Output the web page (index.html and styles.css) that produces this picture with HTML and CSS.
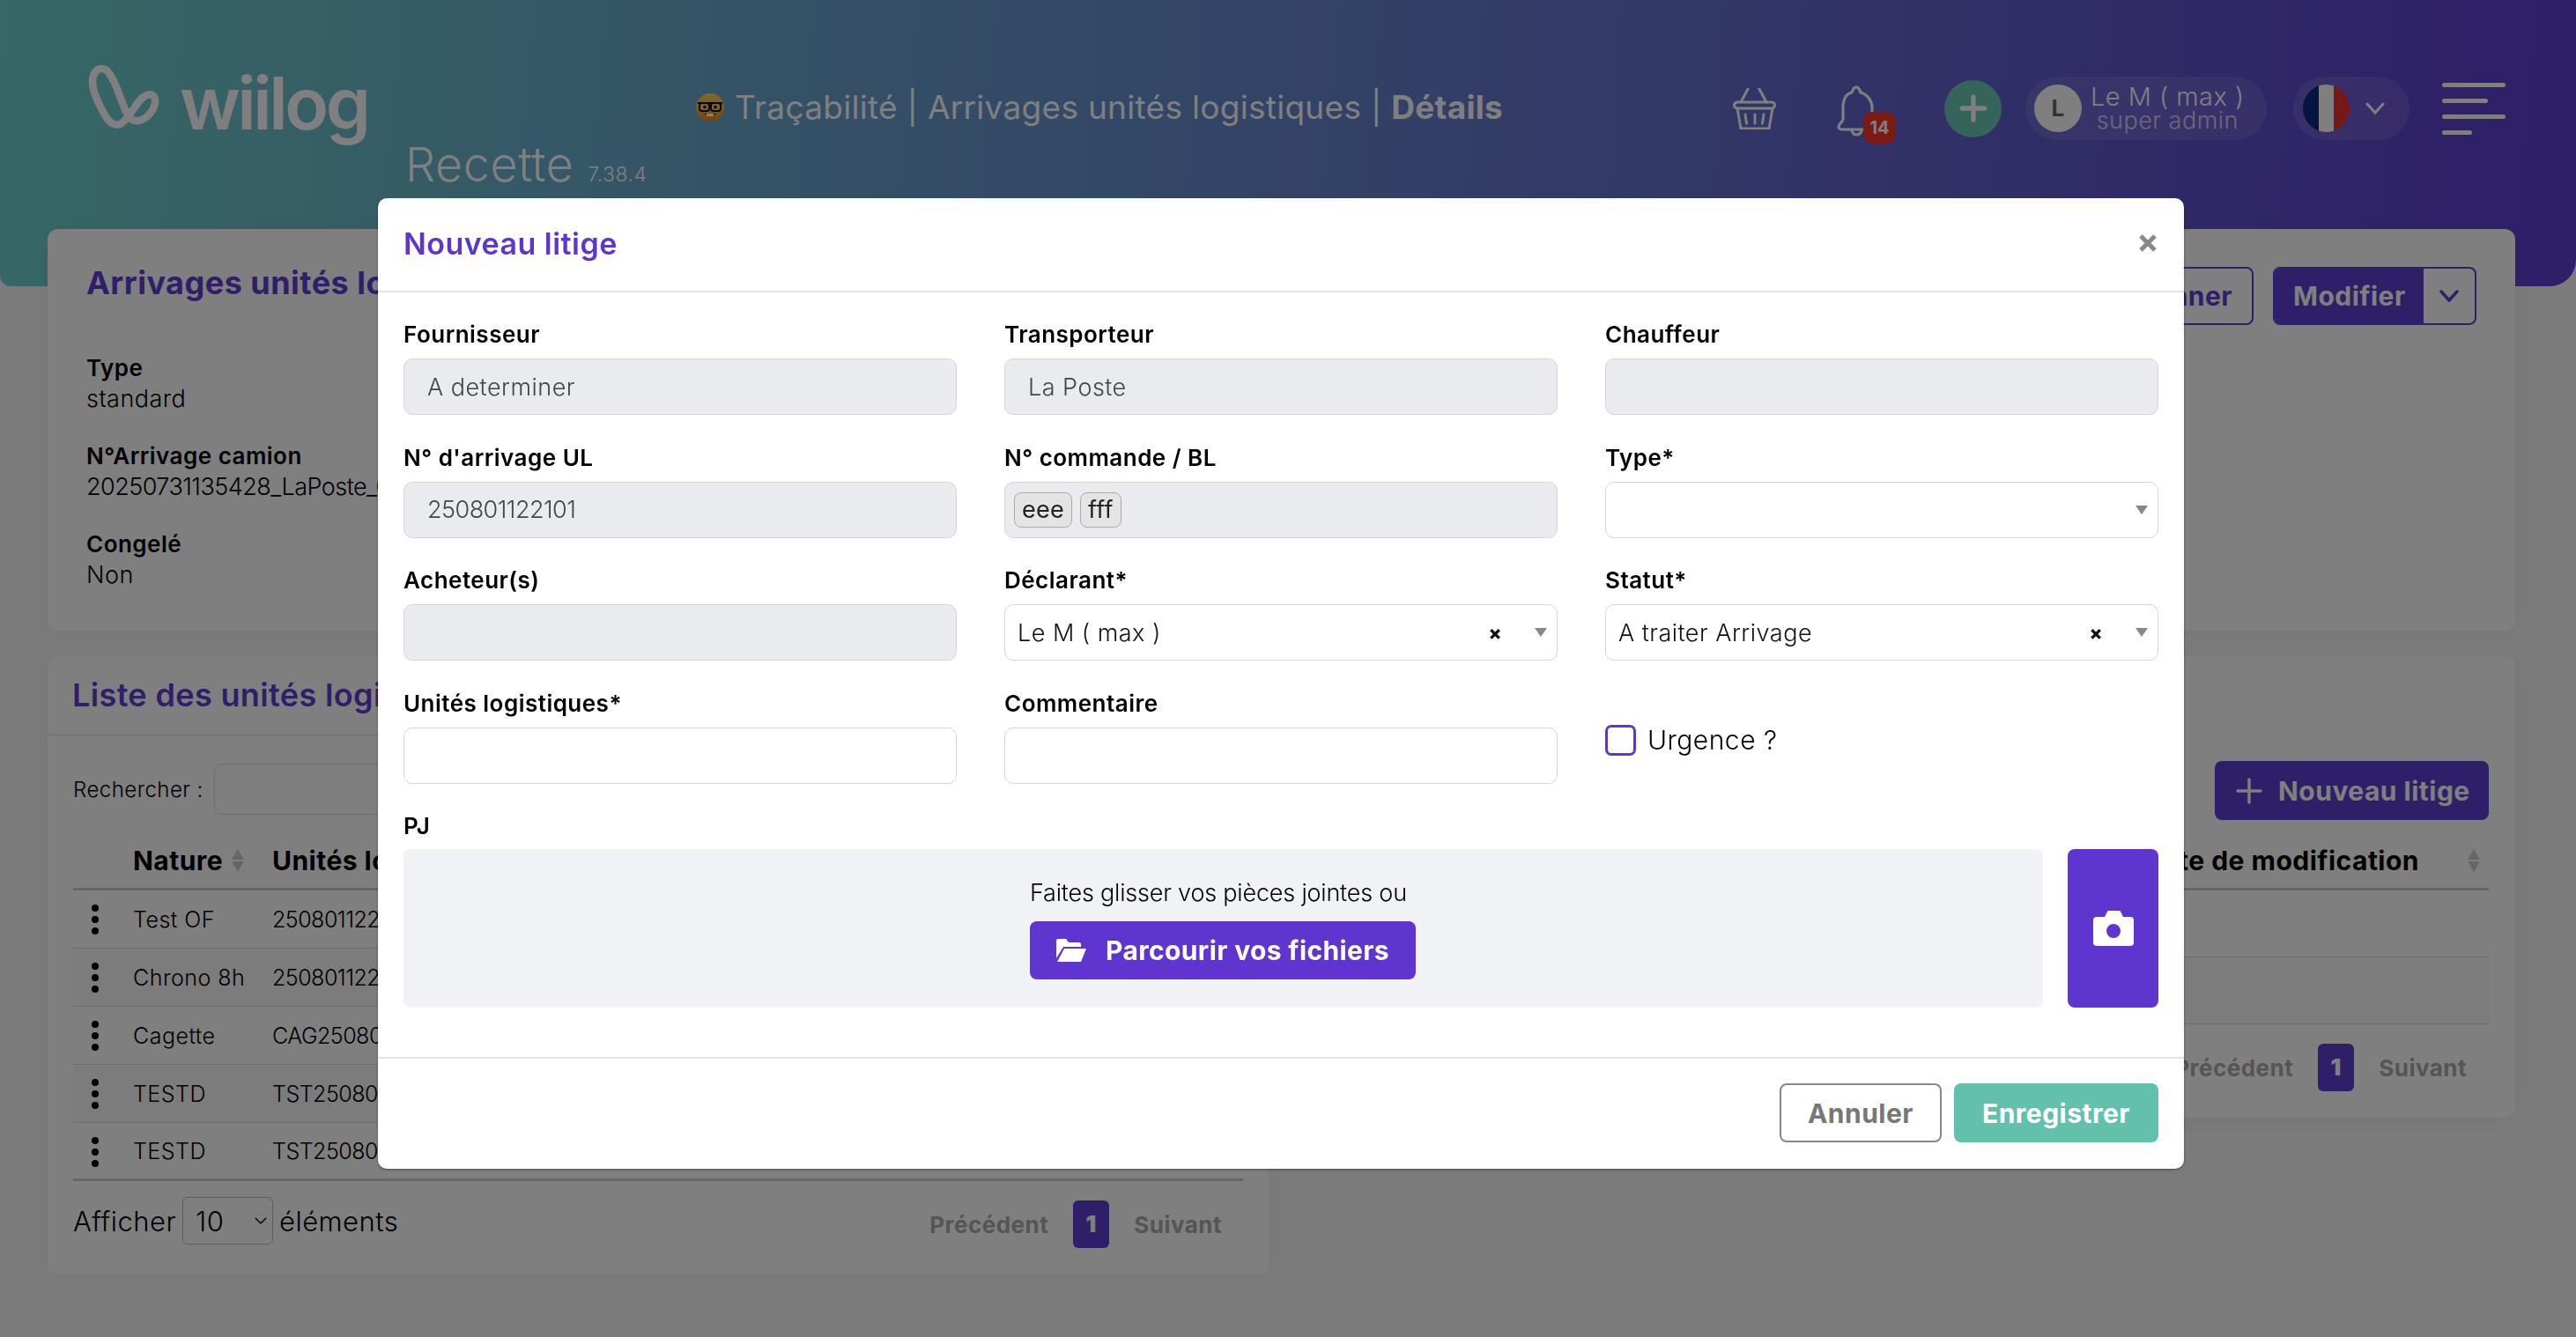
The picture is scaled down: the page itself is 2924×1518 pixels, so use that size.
FILE: index.html
```html
<!DOCTYPE html>
<html lang="fr">
<head>
    <meta charset="UTF-8">
    <title>Wiilog - Arrivages unités logistiques</title>
    <link rel="stylesheet" href="styles.css">
</head>
<body>
    <header class="topbar">
        <div class="brand">
            <div class="logo">
                <svg class="logo-mark" viewBox="0 0 110 100" fill="none" stroke="#fff" stroke-width="8.500">
                    <path d="M25 18C18 18 15 26 15 33C15 45 24 62 30 72C34 80 42 84 48 80C54 76 60 66 67 56C72 49 79 46 83 48C88 51 87 60 81 68C75 76 66 79 60 76C55 73 52 65 47 52C43 40 38 28 33 22C31 19 28 18 25 18Z"/>
                </svg>
                <span class="logo-text">wiilog</span>
            </div>
            <div class="env">Recette <small>7.38.4</small></div>
        </div>
        <div class="page-title">
            <svg class="nerd" viewBox="0 0 32 32">
                <defs>
                    <linearGradient id="nerdFace" x1="0" y1="0" x2="0" y2="1">
                        <stop offset="0" stop-color="#ffd85a"/>
                        <stop offset="1" stop-color="#e88a18"/>
                    </linearGradient>
                </defs>
                <circle cx="16" cy="16" r="16" fill="url(#nerdFace)"/>
                <path d="M2 11h28" stroke="#111" stroke-width="2"/>
                <rect x="4" y="11" width="11" height="9" rx="3" fill="#f8d070" stroke="#111" stroke-width="2"/>
                <rect x="17" y="11" width="11" height="9" rx="3" fill="#f8d070" stroke="#111" stroke-width="2"/>
                <circle cx="10" cy="15.500" r="2" fill="#3a2410"/>
                <circle cx="22" cy="15.500" r="2" fill="#3a2410"/>
                <path d="M9 23c4 4 10 4 14 0z" fill="#5a2a10"/>
                <rect x="12" y="23" width="8" height="3" fill="#fff"/>
            </svg>
            <span>Traçabilité | Arrivages unités logistiques | <b>Détails</b></span>
        </div>
        <div class="actions">
            <svg class="basket" viewBox="0 0 49 47" fill="none" stroke="#fff" stroke-width="3" stroke-linecap="round">
                <path d="M17 1L9 16M30 1L38 16"/>
                <rect x="1.500" y="16" width="46" height="7" rx="3.500"/>
                <path d="M5 23L9 46H41L45 23M14 30l1.500 10M25 30v10M35 30l-1.500 10"/>
            </svg>
            <div class="bell">
                <svg viewBox="0 0 45 58" fill="none" stroke="#fff" stroke-width="3.200" stroke-linecap="round">
                    <path d="M22 2C26 2 26 7 27 8C35 10 40 18 40 26V36"/>
                    <path d="M22 2C18 2 18 7 17 8C9 10 7 18 7 26V38C7 42 2 43 2 47C2 49 4 50 6 50H32"/>
                    <path d="M17 50C17 58 28 58 28 50"/>
                </svg>
                <span class="badge">14</span>
            </div>
            <div class="add-btn">
                <svg viewBox="0 0 32 32"><path d="M16 4v24M4 16h24" stroke="#fff" stroke-width="5" stroke-linecap="round"/></svg>
            </div>
            <div class="user-pill">
                <span class="avatar">L</span>
                <div class="user-text">
                    <div class="user-name">Le M ( max )</div>
                    <div class="user-role">super admin</div>
                </div>
            </div>
            <div class="lang-pill">
                <span class="flag"><i class="blue"></i><i class="white"></i><i class="red"></i></span>
                <svg class="chevron" viewBox="0 0 22 14" fill="none" stroke="#fff" stroke-width="3" stroke-linecap="round"><path d="M2 2l9 10 9-10"/></svg>
            </div>
            <div class="burger"><i class="long"></i><i class="mid"></i><i class="long"></i><i class="short"></i></div>
        </div>
    </header>

    <main class="content">
        <section class="card details">
            <div class="details-head">
                <h2>Arrivages unités logistiques</h2>
                <div class="details-btns">
                    <button class="btn-outline">Scanner</button>
                    <div class="split">
                        <span class="split-main">Modifier</span>
                        <span class="split-arrow">
                            <svg viewBox="0 0 22 14" fill="none" stroke="#5e3cd0" stroke-width="3.500" stroke-linecap="round"><path d="M2 2l9 10 9-10"/></svg>
                        </span>
                    </div>
                </div>
            </div>
            <dl class="info">
                <dt>Type</dt><dd>standard</dd>
                <dt>N°Arrivage camion</dt><dd class="num">20250731135428_LaPoste_0</dd>
                <dt>Congelé</dt><dd>Non</dd>
            </dl>
        </section>

        <div class="lists">
            <section class="card list-left">
                <h3 class="list-title">Liste des unités logistiques</h3>
                <div class="list-body">
                    <div class="search">Rechercher : <span class="search-box"></span></div>
                    <div class="thead">
                        <span class="col-nature">Nature <i class="sort"></i></span>
                        <span>Unités logistiques</span>
                    </div>
                    <div class="row"><i class="dots"></i><span class="col-nature">Test OF</span><span class="num">250801122101</span></div>
                    <div class="row alt"><i class="dots"></i><span class="col-nature">Chrono 8h</span><span class="num">250801122102</span></div>
                    <div class="row"><i class="dots"></i><span class="col-nature">Cagette</span><span class="num">CAG250801122</span></div>
                    <div class="row alt"><i class="dots"></i><span class="col-nature">TESTD</span><span class="num">TST250801122</span></div>
                    <div class="row last"><i class="dots"></i><span class="col-nature">TESTD</span><span class="num">TST250801123</span></div>
                    <div class="list-foot">
                        <div class="length">Afficher <span class="length-select">10 <svg viewBox="0 0 14 9" fill="none" stroke="#111" stroke-width="1.500"><path d="M1 1l6 6 6-6"/></svg></span> éléments</div>
                        <div class="pager"><span>Précédent</span><b>1</b><span>Suivant</span></div>
                    </div>
                </div>
            </section>

            <section class="card list-right">
                <div class="right-head">
                    <button class="btn-new">
                        <svg viewBox="0 0 30 30"><path d="M15 2v26M2 15h26" stroke="#fff" stroke-width="3.500" stroke-linecap="round"/></svg>
                        Nouveau litige
                    </button>
                </div>
                <div class="right-thead"><span>Date de modification</span><i class="sort"></i></div>
                <div class="right-row"></div>
                <div class="right-row alt"></div>
                <div class="pager right-pager"><span>Précédent</span><b>1</b><span>Suivant</span></div>
            </section>
        </div>
    </main>

    <!-- Modal over the dimmed page -->
    <div class="overlay">
        <div class="modal">
            <div class="modal-head">
                <h4>Nouveau litige</h4>
                <svg class="close" viewBox="0 0 20 20"><path d="M2 2l16 16M18 2L2 18" stroke="#888" stroke-width="5"/></svg>
            </div>
            <div class="modal-body">
                <div class="form-grid">
                    <div class="field"><label>Fournisseur</label><div class="input disabled">A determiner</div></div>
                    <div class="field"><label>Transporteur</label><div class="input disabled">La Poste</div></div>
                    <div class="field"><label>Chauffeur</label><div class="input disabled"></div></div>

                    <div class="field"><label>N° d'arrivage UL</label><div class="input disabled num">250801122101</div></div>
                    <div class="field"><label>N° commande / BL</label><div class="input disabled tags"><span class="tag">eee</span><span class="tag">fff</span></div></div>
                    <div class="field"><label>Type*</label><div class="input select"><i class="caret"></i></div></div>

                    <div class="field"><label>Acheteur(s)</label><div class="input disabled"></div></div>
                    <div class="field"><label>Déclarant*</label><div class="input select"><span>Le M ( max )</span><b class="clear">×</b><i class="caret"></i></div></div>
                    <div class="field"><label>Statut*</label><div class="input select"><span>A traiter Arrivage</span><b class="clear">×</b><i class="caret"></i></div></div>

                    <div class="field"><label>Unités logistiques*</label><div class="input"></div></div>
                    <div class="field"><label>Commentaire</label><div class="input"></div></div>
                    <div class="field check-field"><span class="checkbox"></span><span>Urgence ?</span></div>
                </div>
                <label class="pj-label">PJ</label>
                <div class="pj">
                    <div class="dropzone">
                        <span>Faites glisser vos pièces jointes ou</span>
                        <button class="btn-browse">
                            <svg viewBox="0 0 34 26" fill="#fff"><path d="M0 2a2 2 0 0 1 2-2h9l3 4h12a2 2 0 0 1 2 2v3H8L0 22z"/><path d="M9 11h25l-6 15H1z"/></svg>
                            Parcourir vos fichiers
                        </button>
                    </div>
                    <button class="btn-camera">
                        <svg viewBox="0 0 46 40" fill="#fff"><path fill-rule="evenodd" d="M4 7h9l3-6a2 2 0 0 1 2-1h11a2 2 0 0 1 2 1l3 6h8a4 4 0 0 1 4 4v25a4 4 0 0 1-4 4H4a4 4 0 0 1-4-4V11a4 4 0 0 1 4-4zm19 24a8 8 0 1 0 0-16 8 8 0 0 0 0 16z"/></svg>
                    </button>
                </div>
            </div>
            <div class="modal-foot">
                <button class="btn-cancel">Annuler</button>
                <button class="btn-save">Enregistrer</button>
            </div>
        </div>
    </div>
</body>
</html>
```

FILE: styles.css
```css
* {
    box-sizing: border-box;
}

body {
    margin: 0;
    height: 1518px;
    overflow: hidden;
    background-color: #f6f6f6;
    font-family: "Inter", "Liberation Sans", sans-serif;
    letter-spacing: 0.03em;
    color: #000;
}

button {
    font-family: inherit;
    letter-spacing: inherit;
}

.num {
    letter-spacing: -0.02em;
}

/* Header */
.topbar {
    display: flex;
    align-items: flex-start;
    height: 325px;
    padding: 60px 80px 0 90px;
    background: linear-gradient(95deg, #6ed0cb, #5e3cd0);
    border-radius: 0 0 30px 12px;
    color: #fff;
}

.brand {
    width: 700px;
    flex: none;
}

.logo {
    display: flex;
    align-items: flex-start;
    height: 103px;
}

.logo-mark {
    width: 110px;
    height: 100px;
    flex: none;
}

.logo-text {
    margin: 18px 0 0 4px;
    font-size: 82px;
    font-weight: 600;
    line-height: 80px;
    letter-spacing: -3.500px;
}

.env {
    margin-left: 370px;
    font-size: 54px;
    font-weight: 300;
    line-height: 48px;
    white-space: nowrap;
}

.env small {
    font-size: 23px;
}

.page-title {
    display: flex;
    align-items: center;
    gap: 12px;
    margin-top: 37px;
    font-size: 37px;
    font-weight: 400;
    letter-spacing: 0.008em;
    line-height: 50px;
    white-space: nowrap;
}

.page-title b {
    font-weight: 700;
}

.nerd {
    width: 32px;
    height: 32px;
}

.actions {
    display: flex;
    align-items: center;
    height: 72px;
    margin-top: 27px;
    margin-left: auto;
}

.basket {
    width: 49px;
    height: 47px;
}

.bell {
    position: relative;
    width: 67px;
    height: 53px;
    margin-left: 69px;
}

.bell svg {
    display: block;
    width: 45px;
    height: 58px;
}

.badge {
    position: absolute;
    left: 30px;
    top: 30px;
    width: 37px;
    height: 36px;
    border-radius: 10px;
    background-color: #f43424;
    font-size: 20px;
    font-weight: 700;
    line-height: 36px;
    text-align: center;
    letter-spacing: 0;
}

.add-btn {
    display: flex;
    align-items: center;
    justify-content: center;
    width: 65px;
    height: 65px;
    margin-left: 55px;
    border-radius: 50%;
    background-color: #6acab4;
}

.add-btn svg {
    width: 34px;
    height: 34px;
}

.user-pill {
    display: flex;
    align-items: center;
    width: 274px;
    height: 72px;
    margin-left: 27px;
    padding-left: 10px;
    border-radius: 36px;
    background-color: rgba(255, 255, 255, 0.1);
}

.avatar {
    width: 54px;
    height: 54px;
    flex: none;
    border-radius: 50%;
    background-color: #fff;
    color: #666;
    font-size: 26px;
    font-weight: 700;
    line-height: 54px;
    text-align: center;
}

.user-text {
    margin-left: 10px;
    font-weight: 300;
    text-align: center;
}

.user-name {
    font-size: 29px;
    line-height: 28px;
}

.user-role {
    font-size: 27px;
    line-height: 26px;
    opacity: 0.7;
}

.lang-pill {
    display: flex;
    align-items: center;
    width: 132px;
    height: 72px;
    margin-left: 30px;
    padding-left: 11px;
    border-radius: 36px;
    background-color: rgba(255, 255, 255, 0.1);
}

.flag {
    display: flex;
    width: 53px;
    height: 54px;
    overflow: hidden;
    border-radius: 50%;
}

.flag i {
    flex: 1;
}

.flag .blue { background-color: #0a2a80; }
.flag .white { background-color: #fff; }
.flag .red { background-color: #e83030; }

.chevron {
    width: 22px;
    height: 14px;
    margin-left: 18px;
}

.burger {
    display: flex;
    flex-direction: column;
    gap: 13px;
    width: 72px;
    margin-left: 37px;
}

.burger i {
    display: block;
    height: 5px;
    border-radius: 3px;
    background-color: #fff;
}

.burger .long { width: 72px; }
.burger .mid { width: 52px; }
.burger .short { width: 34px; }

/* Page content */
.content {
    margin-top: -65px;
    padding: 0 69px 0 54px;
}

.card {
    border-radius: 12px;
    background-color: #fff;
    box-shadow: 0 2px 20px rgba(0, 0, 0, 0.04);
}

.details {
    position: relative;
    height: 456px;
    padding: 43px 44px;
}

.details-head {
    display: flex;
    justify-content: space-between;
}

.details-head h2 {
    margin: 0;
    color: #5e3cd0;
    font-size: 36px;
    font-weight: 700;
    line-height: 36px;
}

.details-btns {
    display: flex;
    gap: 22px;
}

.btn-outline {
    height: 66px;
    padding: 0 22px;
    border: 2px solid #5e3cd0;
    border-radius: 8px;
    background: none;
    color: #5e3cd0;
    font-size: 30px;
    font-weight: 700;
}

.split {
    display: flex;
    height: 66px;
    border: 2px solid #5e3cd0;
    border-radius: 8px;
    overflow: hidden;
}

.split-main {
    width: 169px;
    padding-left: 21px;
    background-color: #5e3cd0;
    color: #fff;
    font-size: 30px;
    font-weight: 700;
    line-height: 62px;
}

.split-arrow {
    display: flex;
    align-items: center;
    justify-content: center;
    width: 58px;
}

.split-arrow svg {
    width: 22px;
    height: 14px;
}

.info {
    margin: 31px 0 0;
    font-size: 26px;
    line-height: 35px;
}

.info dt {
    font-weight: 600;
}

.info dd {
    margin: 0 0 30px;
    font-size: 27px;
    font-weight: 300;
}

.lists {
    display: flex;
    align-items: flex-start;
    gap: 20px;
    margin-top: 29px;
}

.list-left {
    width: 1386px;
    height: 702px;
}

.list-title {
    margin: 0;
    height: 90px;
    padding: 26px 28px 0;
    border-bottom: 1px solid #ddd;
    color: #5e3cd0;
    font-size: 36px;
    font-weight: 600;
    line-height: 36px;
    letter-spacing: 0.01em;
    white-space: nowrap;
    overflow: hidden;
}

.list-body {
    padding: 32px 29px;
}

.search {
    display: flex;
    align-items: center;
    gap: 12px;
    height: 58px;
    font-size: 24px;
    font-weight: 300;
}

.search-box {
    width: 400px;
    height: 58px;
    border: 1px solid #ddd;
    border-radius: 10px;
}

.thead {
    display: flex;
    align-items: center;
    height: 86px;
    padding-top: 20px;
    border-bottom: 3px solid #ccc;
    font-size: 30px;
    font-weight: 700;
}

.thead span {
    white-space: nowrap;
}

.col-nature {
    display: inline-flex;
    align-items: center;
    width: 158px;
    margin-left: 68px;
    flex: none;
}

.sort {
    display: inline-flex;
    flex-direction: column;
    gap: 2px;
    margin-left: 10px;
    flex: none;
}

.sort::before,
.sort::after {
    content: "";
    border-left: 7px solid transparent;
    border-right: 7px solid transparent;
}

.sort::before {
    border-bottom: 12px solid #ccc;
}

.sort::after {
    border-top: 12px solid #ccc;
}

.row {
    position: relative;
    display: flex;
    align-items: center;
    height: 66px;
    border-bottom: 1px solid #ddd;
    font-size: 25px;
    font-weight: 300;
    white-space: nowrap;
}

.row.alt {
    background-color: #f8f8f8;
}

.row.last {
    border-bottom: 3px solid #ccc;
}

.dots {
    position: absolute;
    left: 21px;
    top: 16px;
    width: 8px;
    height: 8px;
    border-radius: 50%;
    background-color: #000;
    box-shadow: 0 13px 0 #000, 0 26px 0 #000;
}

.list-foot {
    display: flex;
    justify-content: space-between;
    align-items: center;
    margin-top: 14px;
}

.length {
    display: flex;
    align-items: center;
    gap: 7px;
    font-size: 31px;
    font-weight: 300;
    letter-spacing: 0.015em;
}

.length-select {
    display: flex;
    align-items: center;
    justify-content: space-between;
    width: 103px;
    height: 54px;
    padding: 0 6px 0 14px;
    border: 1px solid #bbb;
    border-radius: 6px;
}

.length-select svg {
    width: 14px;
    height: 9px;
}

.pager {
    display: flex;
    align-items: center;
    gap: 28px;
    padding-right: 24px;
    color: #aaa;
    font-size: 26px;
    font-weight: 700;
}

.pager b {
    width: 41px;
    height: 54px;
    border-radius: 6px;
    background-color: #5e3cd0;
    color: #fff;
    line-height: 54px;
    text-align: center;
}

.list-foot .pager {
    margin-top: 8px;
}

.list-right {
    flex: 1;
    height: 524px;
}

.right-head {
    display: flex;
    justify-content: flex-end;
    height: 185px;
    padding: 119px 30px 0 0;
}

.btn-new {
    display: flex;
    align-items: center;
    gap: 18px;
    width: 311px;
    height: 67px;
    padding: 0 24px;
    border: none;
    border-radius: 8px;
    background-color: #5e3cd0;
    color: #fff;
    font-size: 30px;
    font-weight: 700;
    white-space: nowrap;
}

.btn-new svg {
    width: 30px;
    height: 30px;
    flex: none;
}

.right-thead {
    display: flex;
    align-items: center;
    justify-content: flex-end;
    height: 81px;
    margin: 0 30px 0 28px;
    padding: 16px 10px 0 0;
    border-bottom: 3px solid #ccc;
    font-size: 30px;
    font-weight: 700;
}

.right-thead .sort {
    margin-left: 55px;
}

.right-row {
    height: 76px;
    margin: 0 30px 0 28px;
    border-bottom: 1px solid #ddd;
}

.right-row.alt {
    background-color: #f8f8f8;
}

.right-pager {
    justify-content: flex-end;
    margin: 22px 55px 0 0;
    padding-right: 0;
}

/* Modal */
.overlay {
    position: fixed;
    top: 0;
    left: 0;
    width: 100%;
    height: 100%;
    display: flex;
    justify-content: center;
    align-items: flex-start;
    padding: 225px 16px 0 0;
    background-color: rgba(0, 0, 0, 0.5);
    z-index: 1000;
}

.modal {
    width: 2050px;
    height: 1102px;
    border-radius: 10px;
    background-color: #fff;
    box-shadow: 0 1px 3px rgba(0, 0, 0, 0.4);
}

.modal-head {
    display: flex;
    align-items: center;
    justify-content: space-between;
    height: 107px;
    padding: 0 31px 0 29px;
    border-bottom: 2px solid #e4e4e4;
}

.modal-head h4 {
    margin: 0 0 2px;
    color: #5e36cf;
    font-size: 34px;
    font-weight: 600;
}

.close {
    width: 20px;
    height: 20px;
    margin-bottom: 4px;
}

.modal-body {
    height: 870px;
    padding: 31px 29px 0;
    border-bottom: 2px solid #e4e4e4;
}

.form-grid {
    display: grid;
    grid-template-columns: repeat(3, 628px);
    column-gap: 54px;
    grid-auto-rows: 139.500px;
}

.field label,
.pj-label {
    display: block;
    height: 44px;
    font-size: 26px;
    font-weight: 600;
    line-height: 34px;
}

.input {
    display: flex;
    align-items: center;
    height: 64px;
    padding: 0 26px;
    border: 1.500px solid #d4d6db;
    border-radius: 10px;
    font-size: 27px;
    font-weight: 300;
}

.input.disabled {
    background-color: #e9ebef;
    color: #444;
}

.input.tags {
    gap: 9px;
    padding: 0 0 0 10px;
}

.tag {
    display: flex;
    align-items: center;
    height: 40px;
    padding: 0 8px;
    border: 1px solid #aaa;
    border-radius: 8px;
    background-color: #e4e4e4;
    color: #222;
    font-weight: 400;
    letter-spacing: 0.01em;
}

.input.select {
    position: relative;
    padding-left: 14px;
    color: #111;
}

.clear {
    position: absolute;
    right: 62px;
    font-size: 22px;
    font-weight: 800;
}

.caret {
    position: absolute;
    right: 11px;
    top: 26px;
    border-top: 10px solid #888;
    border-left: 7px solid transparent;
    border-right: 7px solid transparent;
}

.check-field {
    display: flex;
    align-items: center;
    gap: 13px;
    height: 35px;
    margin-top: 41px;
    font-size: 30px;
    font-weight: 300;
}

.checkbox {
    width: 35px;
    height: 35px;
    border: 3px solid #5e36cf;
    border-radius: 7px;
}

.pj-label {
    height: 43px;
}

.pj {
    display: flex;
    gap: 28px;
}

.dropzone {
    display: flex;
    flex-direction: column;
    align-items: flex-start;
    width: 1861px;
    height: 180px;
    padding: 32px 0 0 711px;
    border-radius: 8px;
    background-color: #f1f2f6;
    font-size: 27px;
    font-weight: 300;
    letter-spacing: -0.2px;
}

.dropzone span {
    line-height: 36px;
    white-space: nowrap;
}

.btn-browse {
    display: flex;
    align-items: center;
    gap: 22px;
    width: 438px;
    height: 66px;
    margin-top: 14px;
    padding: 0 30px;
    border: none;
    border-radius: 8px;
    background-color: #5e36cf;
    color: #fff;
    font-size: 30px;
    font-weight: 700;
    letter-spacing: 0.012em;
    white-space: nowrap;
}

.btn-browse svg {
    width: 34px;
    height: 26px;
    flex: none;
}

.btn-camera {
    display: flex;
    align-items: center;
    justify-content: center;
    width: 103px;
    height: 180px;
    border: none;
    border-radius: 8px;
    background-color: #5e36cf;
}

.btn-camera svg {
    width: 46px;
    height: 40px;
}

.modal-foot {
    display: flex;
    justify-content: flex-end;
    gap: 14px;
    padding: 28px 29px 0;
}

.btn-cancel,
.btn-save {
    height: 67px;
    border-radius: 8px;
    font-size: 30px;
    font-weight: 700;
}

.btn-cancel {
    width: 184px;
    border: 2px solid #888;
    background-color: #fff;
    color: #777;
}

.btn-save {
    width: 232px;
    border: none;
    background-color: #63c0ab;
    color: #fff;
}
```
